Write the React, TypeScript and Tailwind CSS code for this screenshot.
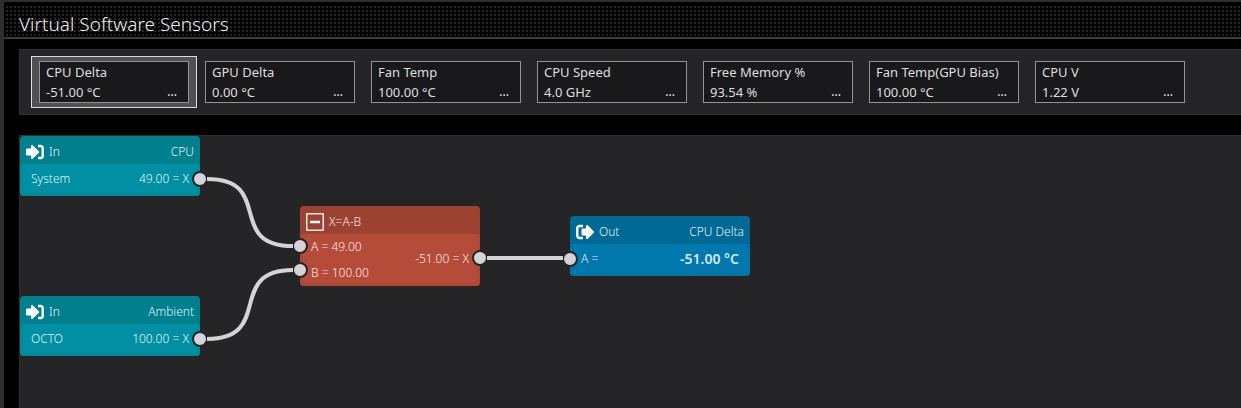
import React from 'react';

type Sensor = { name: string; value: string };

const sensors: Sensor[] = [
  { name: 'CPU Delta', value: '-51.00 °C' },
  { name: 'GPU Delta', value: '0.00 °C' },
  { name: 'Fan Temp', value: '100.00 °C' },
  { name: 'CPU Speed', value: '4.0 GHz' },
  { name: 'Free Memory %', value: '93.54 %' },
  { name: 'Fan Temp(GPU Bias)', value: '100.00 °C' },
  { name: 'CPU V', value: '1.22 V' },
];

const wires = [
  'M187 43 C255 43 205 110 273 110',
  'M187 203 C255 203 205 134 273 134',
  'M467 122 H543',
];

const InIcon = () => (
  <svg width="18" height="16" viewBox="0 0 18 16" aria-hidden="true">
    <path d="M1 5.5h5V2L12.2 8 6 14v-3.5H1z" fill="#fff" stroke="#fff" strokeWidth="2" strokeLinejoin="round" />
    <path d="M12 2h2.5A2.2 2.2 0 0 1 16.7 4.2v7.6a2.2 2.2 0 0 1-2.2 2.2H12" fill="none" stroke="#fff" strokeWidth="2.4" />
  </svg>
);

const OutIcon = () => (
  <svg width="18" height="16" viewBox="0 0 18 16" aria-hidden="true">
    <path d="M6.5 5.5h4.5V2L17 8l-6 6v-3.5H6.5z" fill="#fff" stroke="#fff" strokeWidth="2" strokeLinejoin="round" />
    <path d="M7 2H3.5A2.2 2.2 0 0 0 1.3 4.2v7.6A2.2 2.2 0 0 0 3.5 14H7" fill="none" stroke="#fff" strokeWidth="2.4" />
  </svg>
);

const MinusIcon = () => (
  <svg width="18" height="18" viewBox="0 0 18 18" aria-hidden="true">
    <rect x="0.75" y="0.75" width="16.5" height="16.5" rx="0.5" fill="none" stroke="#f6e9e6" strokeWidth="1.5" />
    <path d="M4 9h10" stroke="#fff" strokeWidth="2.5" />
  </svg>
);

const Port = ({ className }: { className: string }) => (
  <span className={`absolute size-4 rounded-full border-2 border-[#252528] bg-[#d6d3d6] ${className}`} />
);

type NodeProps = {
  place: string;
  head: string;
  body: string;
  icon: React.ReactNode;
  label: string;
  title?: string;
  children: React.ReactNode;
};

const Node: React.FC<NodeProps> = ({ place, head, body, icon, label, title, children }) => (
  <section className={`absolute flex w-[180px] flex-col rounded-sm text-xs font-[350] ${head} ${place}`}>
    <header className="flex h-7 items-center px-1.5 pt-1">
      {icon}
      <span className="ml-[5px]">{label}</span>
      <span className="ml-auto">{title}</span>
    </header>
    <div className={`relative flex flex-1 items-center justify-between rounded-b-sm border-x-[3px] border-b-[3px] px-2 ${body}`}>
      {children}
    </div>
  </section>
);

const App: React.FC = () => {
  const [selected, setSelected] = React.useState(0);

  return (
    <div className="flex min-h-screen flex-col border-l-4 border-t-2 border-[#2e2e2e] bg-black font-['Noto_Sans','Open_Sans',sans-serif] text-[#dedede]">
      <header className="border-b-2 border-[#3c3c3c] pt-1">
        <div className="flex h-[31px] items-center bg-[conic-gradient(#262626_25%,transparent_0)] bg-[length:4px_4px] px-[15px] pt-1">
          <h1 className="text-[19px] font-[350] leading-6 text-[#ececec]">Virtual Software Sensors</h1>
        </div>
      </header>

      <main className="flex flex-1 flex-col gap-5 pl-[15px] pt-2.5">
        <div className="flex overflow-hidden border border-r-0 border-[#303032] bg-[#252527] py-1.5 pl-[11px]">
          {sensors.map((sensor, index) => (
            <button
              key={sensor.name}
              type="button"
              onClick={() => setSelected(index)}
              className={`w-[166px] shrink-0 border px-[7px] py-1 text-left ${
                selected === index ? 'border-[#dcdcdc] bg-[#515153]' : 'border-transparent'
              }`}
            >
              <span className="block border border-[#949494] bg-[#19191b] px-1.5 text-[13px] leading-5">
                <span className="block">{sensor.name}</span>
                <span className="flex justify-between pr-[5px]">
                  <span>{sensor.value}</span>
                  <span className="text-xs leading-5 font-medium">...</span>
                </span>
              </span>
            </button>
          ))}
        </div>

        <div className="relative flex-1 overflow-hidden border border-b-0 border-r-0 border-[#303032] bg-[#252528]">
          <Node
            place="left-0 top-0 h-[60px] text-[#e2f5f7]"
            head="bg-[#007f8c]"
            body="border-[#008a9b] bg-[#008fa3]"
            icon={<InIcon />}
            label="In"
            title="CPU"
          >
            <span>System</span>
            <span>49.00 = X</span>
            <Port className="-right-[11px] top-[7px]" />
          </Node>

          <Node
            place="left-0 top-40 h-[60px] text-[#e2f5f7]"
            head="bg-[#007f8c]"
            body="border-[#008a9b] bg-[#008fa3]"
            icon={<InIcon />}
            label="In"
            title="Ambient"
          >
            <span>OCTO</span>
            <span>100.00 = X</span>
            <Port className="-right-[11px] top-[7px]" />
          </Node>

          <Node
            place="left-[280px] top-[70px] h-20 text-[#fae8e4]"
            head="bg-[#9c4231]"
            body="border-[#ad4836] bg-[#b54c39]"
            icon={<MinusIcon />}
            label="X=A-B"
          >
            <div className="flex flex-col gap-2.5 pt-0.5">
              <span>A = 49.00</span>
              <span>B = 100.00</span>
            </div>
            <span>-51.00 = X</span>
            <Port className="-left-[11px] top-1" />
            <Port className="-left-[11px] top-7" />
            <Port className="-right-[11px] top-4" />
          </Node>

          <Node
            place="left-[550px] top-20 h-[60px] text-[#e0f0f8]"
            head="bg-[#006a94]"
            body="border-[#0076a8] bg-[#0078ae]"
            icon={<OutIcon />}
            label="Out"
            title="CPU Delta"
          >
            <span>A =</span>
            <strong className="text-sm font-semibold text-[#d3e7f1]">-51.00 °C</strong>
            <Port className="-left-[11px] top-[7px]" />
          </Node>

          <svg className="pointer-events-none absolute left-0 top-0 h-60 w-[740px]" fill="none" aria-hidden="true">
            {wires.map((d) => (
              <path key={d} d={d} stroke="#d6d3d6" strokeWidth="4" />
            ))}
          </svg>
        </div>
      </main>
    </div>
  );
};

export default App;
